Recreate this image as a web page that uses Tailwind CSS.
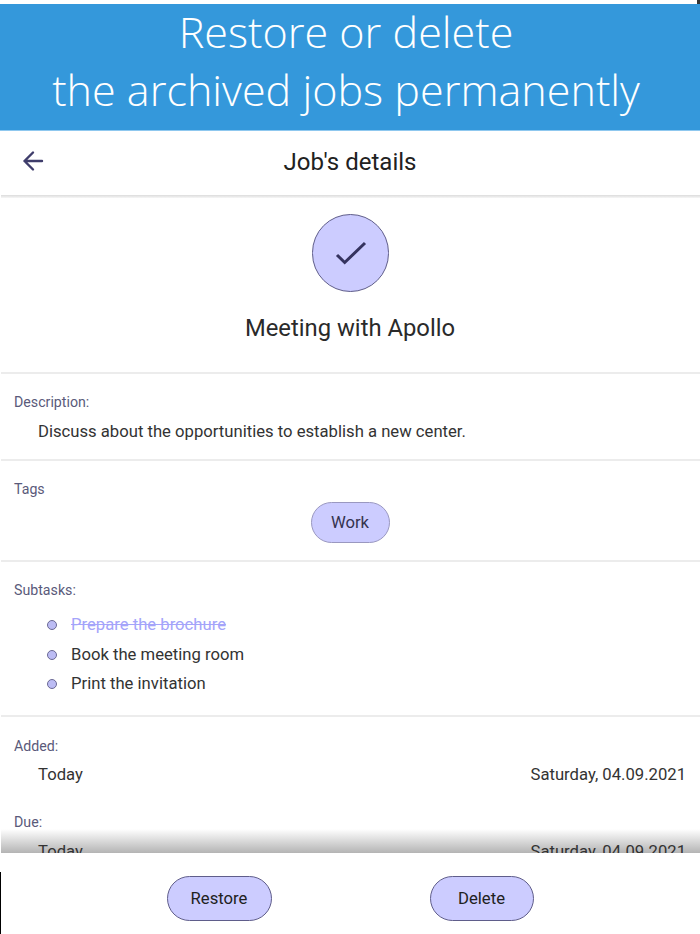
<!DOCTYPE html>
<html lang="en">
<head>
    <meta charset="UTF-8">
    <meta name="viewport" content="width=device-width, initial-scale=1.0">
    <title>Job's details</title>
    <script src="https://cdn.jsdelivr.net/npm/@tailwindcss/browser@4"></script>
</head>
<body class="bg-white w-[700px] h-[934px] overflow-hidden flex flex-col font-['Roboto',sans-serif] text-[#333333]">
    <!-- Caption banner -->
    <div class="h-[4px] shrink-0 flex justify-end"><span class="w-[3px] bg-[#333333]"></span></div>
    <div class="h-[127px] shrink-0 bg-[#3498db] border-b border-[#8fc8ef] flex flex-col items-center pr-[8px] text-white font-['Open_Sans',sans-serif] font-light text-[43.1px] leading-[58px]">
        <p class="mt-[-1px]">Restore or delete</p>
        <p>the archived jobs permanently</p>
    </div>

    <!-- App bar -->
    <div class="h-[64px] shrink-0 flex items-center justify-center relative">
        <svg class="absolute left-[21px] top-[18px] w-[24px] h-[24px]" viewBox="0 0 24 24" fill="none" stroke="#3f3d6b" stroke-width="2.4" stroke-linecap="round" stroke-linejoin="round">
            <path d="M21 12H3.5M12 3.5L3.5 12l8.5 8.5"/>
        </svg>
        <h1 class="text-[24px] font-[450] text-[#212121] mt-[-2px]">Job's details</h1>
    </div>
    <div class="h-[3px] shrink-0 ml-[1px] bg-gradient-to-b from-[#dcdcdc] to-[#f6f6f6]"></div>

    <!-- Scroll area -->
    <div class="h-[655px] shrink-0 overflow-hidden relative">
        <div class="h-[174px] flex flex-col items-center pt-[16px]">
            <div class="w-[77px] h-[78px] rounded-full bg-[#ccccff] border border-[#5f5d8a] flex items-center justify-center">
                <svg class="w-[36px] h-[36px]" viewBox="0 0 36 36" fill="none" stroke="#35335f" stroke-width="3">
                    <path d="M5 20l7.7 7.5L33 8"/>
                </svg>
            </div>
            <h2 class="text-[23.8px] leading-[28px] mt-[22px] text-[#2a2a2a]">Meeting with Apollo</h2>
        </div>
        <div class="h-[2px] ml-[1px] bg-[#ececec]"></div>

        <div class="h-[85px] px-[14px] pt-[19px]">
            <p class="text-[14.2px] leading-[18px] text-[#5a5a7a]">Description:</p>
            <p class="text-[16.66px] leading-[20px] pl-[24px] mt-[11px]">Discuss about the opportunities to establish a new center.</p>
        </div>
        <div class="h-[2px] ml-[1px] bg-[#ececec]"></div>

        <div class="h-[99px] px-[14px] pt-[19px]">
            <p class="text-[14.2px] leading-[18px] text-[#5a5a7a]">Tags</p>
            <div class="flex justify-center mt-[4px]">
                <span class="w-[79px] h-[41px] rounded-full bg-[#ccccff] border border-[#9a98c0] flex items-center justify-center pt-[2px] text-[16.66px] text-[#35334f]">Work</span>
            </div>
        </div>
        <div class="h-[2px] ml-[1px] bg-[#ececec]"></div>

        <div class="h-[153px] px-[14px] pt-[19px]">
            <p class="text-[14.2px] leading-[18px] text-[#5a5a7a]">Subtasks:</p>
            <ul class="pl-[33px] mt-[16px] flex flex-col gap-[9.5px] text-[16.66px] leading-[20px]">
                <li class="flex items-center gap-[14px]"><span class="w-[10px] h-[10px] rounded-full bg-[#bcbcf4] border-[1.5px] border-[#6b6994]"></span><span class="text-[#a4a4fa] line-through">Prepare the brochure</span></li>
                <li class="flex items-center gap-[14px]"><span class="w-[10px] h-[10px] rounded-full bg-[#bcbcf4] border-[1.5px] border-[#6b6994]"></span><span>Book the meeting room</span></li>
                <li class="flex items-center gap-[14px]"><span class="w-[10px] h-[10px] rounded-full bg-[#bcbcf4] border-[1.5px] border-[#6b6994]"></span><span>Print the invitation</span></li>
            </ul>
        </div>
        <div class="h-[2px] ml-[1px] bg-[#ececec]"></div>

        <div class="absolute left-[1px] right-0 bottom-0 h-[24px] bg-gradient-to-b from-white/0 to-[#b4b4b4]"></div>

        <div class="px-[14px] pt-[20px] relative">
            <p class="text-[14.2px] leading-[18px] text-[#5a5a7a]">Added:</p>
            <div class="flex justify-between pl-[24px] mt-[10px] text-[16.66px] leading-[20px]"><span>Today</span><span>Saturday, 04.09.2021</span></div>
            <p class="text-[14.2px] leading-[18px] text-[#5a5a7a] mt-[28px]">Due:</p>
            <div class="flex justify-between pl-[24px] mt-[11px] text-[16.66px] leading-[20px]"><span>Today</span><span>Saturday, 04.09.2021</span></div>
        </div>
    </div>

    <!-- Actions -->
    <div class="flex-1 flex justify-center gap-[158px] pt-[23px] relative">
        <span class="absolute left-0 top-[19px] bottom-0 w-[1px] bg-black"></span>
        <button class="w-[105px] h-[45px] rounded-full bg-[#ccccff] border border-[#5f5d8a] pt-[2px] text-[16.66px] font-[450] text-[#212121]">Restore</button>
        <button class="w-[104px] h-[45px] rounded-full bg-[#ccccff] border border-[#5f5d8a] pt-[2px] text-[16.66px] font-[450] text-[#212121]">Delete</button>
    </div>
</body>
</html>
